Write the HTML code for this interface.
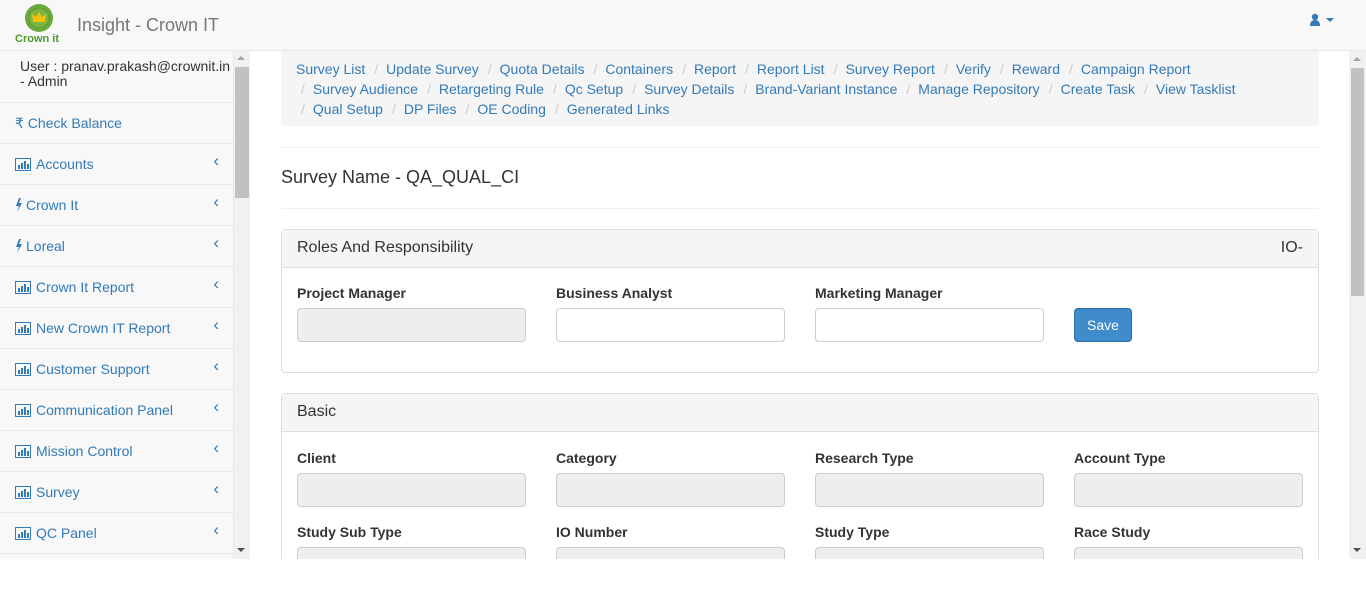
<!DOCTYPE html>
<html><head><meta charset="utf-8"><style>
*{box-sizing:border-box;margin:0;padding:0}
body{width:1366px;height:589px;overflow:hidden;background:#fff;font-family:"Liberation Sans",sans-serif;font-size:14px;color:#333;position:relative}
.top{position:absolute;left:0;top:0;width:1366px;height:51px;background:#f8f8f8;border-bottom:1px solid #e7e7e7}
.brand{position:absolute;left:77px;top:15px;font-size:18px;color:#777}
.side{position:absolute;left:0;top:51px;width:234px;height:508px;background:#f8f8f8;overflow:hidden;border-right:1px solid #e7e7e7}
.side .it{height:41px;border-bottom:1px solid #e7e7e7;color:#337ab7;padding:12px 0 0 15px;position:relative;font-size:14px}
.side .it svg{vertical-align:-2px;margin-right:5px}
.side .it .ar{position:absolute;right:14px;top:7px;color:#337ab7;font-size:17px}
.sb{position:absolute;background:#f1f1f1}
.main{position:absolute;left:250px;top:51px;width:1099px;height:508px;background:#fff;overflow:hidden}
.bc{position:absolute;left:31px;top:0;width:1038px;height:75px;background:#f5f5f5;border-radius:0 0 4px 4px;padding:8px 15px;line-height:20px;color:#337ab7;white-space:nowrap}
.bc .s{color:#ccc;padding:0 8px 0 9px}
.hr{position:absolute;left:31px;width:1038px;border-top:1px solid #eee}
.panel{position:absolute;left:31px;width:1038px;border:1px solid #ddd;border-radius:4px;background:#fff}
.ph{height:38px;background:#f5f5f5;border-bottom:1px solid #ddd;padding:9px 15px;font-size:16px}
.lbl{position:absolute;font-weight:bold;font-size:14px}
.inp{position:absolute;width:229px;height:34px;border:1px solid #ccc;border-radius:4px;background:#fff}
.inp.d{background:#eee}
</style></head><body>
<div class="top">
<svg style="position:absolute;left:24px;top:3px" width="30" height="30"><circle cx="15" cy="15" r="14" fill="#6aaa3a"/><circle cx="15" cy="15" r="10" fill="#7cb342" stroke="#5d9a2f"/><path d="M9 19 L8 11 L12 14 L15 9 L18 14 L22 11 L21 19Z" fill="#f4c20d"/></svg>
<div style="position:absolute;left:15px;top:33px;font-size:11px;font-weight:bold;color:#4c9a2a">Crown it</div>
<div class="brand">Insight - Crown IT</div>
<svg style="position:absolute;left:1309px;top:13px" width="30" height="14"><circle cx="6" cy="4" r="3.2" fill="#337ab7"/><path d="M1 13 Q1 7 6 7 Q11 7 11 13Z" fill="#337ab7"/><path d="M17 5 L25 5 L21 9Z" fill="#337ab7"/></svg>
</div>
<div class="side">
<div style="height:52px;border-bottom:1px solid #e7e7e7;padding:8px 0 0 20px;color:#333;line-height:15px">User : pranav.prakash@crownit.in<br>- Admin</div>
<div class="it">₹ Check Balance</div>
<div class="it"><svg width="16" height="13"><rect x="0.5" y="0.5" width="15" height="12" fill="none" stroke="#337ab7"/><rect x="3" y="7" width="2" height="4" fill="#337ab7"/><rect x="6" y="5" width="2" height="6" fill="#337ab7"/><rect x="9" y="3" width="2" height="8" fill="#337ab7"/><rect x="12" y="6" width="2" height="5" fill="#337ab7"/></svg>Accounts<span class="ar">‹</span></div>
<div class="it"><svg width="8" height="14" style="margin-right:3px"><path d="M4 0 L1 8 L4 8 L2 14 L7 5 L4 5 L6 0Z" fill="#337ab7"/></svg>Crown It<span class="ar">‹</span></div>
<div class="it"><svg width="8" height="14" style="margin-right:3px"><path d="M4 0 L1 8 L4 8 L2 14 L7 5 L4 5 L6 0Z" fill="#337ab7"/></svg>Loreal<span class="ar">‹</span></div>
<div class="it"><svg width="16" height="13"><rect x="0.5" y="0.5" width="15" height="12" fill="none" stroke="#337ab7"/><rect x="3" y="7" width="2" height="4" fill="#337ab7"/><rect x="6" y="5" width="2" height="6" fill="#337ab7"/><rect x="9" y="3" width="2" height="8" fill="#337ab7"/><rect x="12" y="6" width="2" height="5" fill="#337ab7"/></svg>Crown It Report<span class="ar">‹</span></div>
<div class="it"><svg width="16" height="13"><rect x="0.5" y="0.5" width="15" height="12" fill="none" stroke="#337ab7"/><rect x="3" y="7" width="2" height="4" fill="#337ab7"/><rect x="6" y="5" width="2" height="6" fill="#337ab7"/><rect x="9" y="3" width="2" height="8" fill="#337ab7"/><rect x="12" y="6" width="2" height="5" fill="#337ab7"/></svg>New Crown IT Report<span class="ar">‹</span></div>
<div class="it"><svg width="16" height="13"><rect x="0.5" y="0.5" width="15" height="12" fill="none" stroke="#337ab7"/><rect x="3" y="7" width="2" height="4" fill="#337ab7"/><rect x="6" y="5" width="2" height="6" fill="#337ab7"/><rect x="9" y="3" width="2" height="8" fill="#337ab7"/><rect x="12" y="6" width="2" height="5" fill="#337ab7"/></svg>Customer Support<span class="ar">‹</span></div>
<div class="it"><svg width="16" height="13"><rect x="0.5" y="0.5" width="15" height="12" fill="none" stroke="#337ab7"/><rect x="3" y="7" width="2" height="4" fill="#337ab7"/><rect x="6" y="5" width="2" height="6" fill="#337ab7"/><rect x="9" y="3" width="2" height="8" fill="#337ab7"/><rect x="12" y="6" width="2" height="5" fill="#337ab7"/></svg>Communication Panel<span class="ar">‹</span></div>
<div class="it"><svg width="16" height="13"><rect x="0.5" y="0.5" width="15" height="12" fill="none" stroke="#337ab7"/><rect x="3" y="7" width="2" height="4" fill="#337ab7"/><rect x="6" y="5" width="2" height="6" fill="#337ab7"/><rect x="9" y="3" width="2" height="8" fill="#337ab7"/><rect x="12" y="6" width="2" height="5" fill="#337ab7"/></svg>Mission Control<span class="ar">‹</span></div>
<div class="it"><svg width="16" height="13"><rect x="0.5" y="0.5" width="15" height="12" fill="none" stroke="#337ab7"/><rect x="3" y="7" width="2" height="4" fill="#337ab7"/><rect x="6" y="5" width="2" height="6" fill="#337ab7"/><rect x="9" y="3" width="2" height="8" fill="#337ab7"/><rect x="12" y="6" width="2" height="5" fill="#337ab7"/></svg>Survey<span class="ar">‹</span></div>
<div class="it"><svg width="16" height="13"><rect x="0.5" y="0.5" width="15" height="12" fill="none" stroke="#337ab7"/><rect x="3" y="7" width="2" height="4" fill="#337ab7"/><rect x="6" y="5" width="2" height="6" fill="#337ab7"/><rect x="9" y="3" width="2" height="8" fill="#337ab7"/><rect x="12" y="6" width="2" height="5" fill="#337ab7"/></svg>QC Panel<span class="ar">‹</span></div>
</div>
<div class="sb" style="left:234px;top:51px;width:16px;height:508px"></div>
<div style="position:absolute;left:235px;top:67px;width:14px;height:131px;background:#c1c1c1"></div>
<div style="position:absolute;left:237px;top:56px;width:0;height:0;border:4px solid transparent;border-bottom-color:#a3a3a3;border-top:0"></div>
<div style="position:absolute;left:237px;top:548px;width:0;height:0;border:4px solid transparent;border-top-color:#505050;border-bottom:0"></div>
<div class="sb" style="left:1349px;top:51px;width:17px;height:508px"></div>
<div style="position:absolute;left:1351px;top:68px;width:13px;height:228px;background:#c1c1c1"></div>
<div style="position:absolute;left:1353px;top:57px;width:0;height:0;border:4px solid transparent;border-bottom-color:#a3a3a3;border-top:0"></div>
<div style="position:absolute;left:1353px;top:548px;width:0;height:0;border:4px solid transparent;border-top-color:#505050;border-bottom:0"></div>
<div class="main">
<div class="bc">Survey List<span class="s">/</span>Update Survey<span class="s">/</span>Quota Details<span class="s">/</span>Containers<span class="s">/</span>Report<span class="s">/</span>Report List<span class="s">/</span>Survey Report<span class="s">/</span>Verify<span class="s">/</span>Reward<span class="s">/</span>Campaign Report<br><span class="s" style="padding-left:5px">/</span>Survey Audience<span class="s">/</span>Retargeting Rule<span class="s">/</span>Qc Setup<span class="s">/</span>Survey Details<span class="s">/</span>Brand-Variant Instance<span class="s">/</span>Manage Repository<span class="s">/</span>Create Task<span class="s">/</span>View Tasklist<br><span class="s" style="padding-left:5px">/</span>Qual Setup<span class="s">/</span>DP Files<span class="s">/</span>OE Coding<span class="s">/</span>Generated Links</div>
<div class="hr" style="top:96px"></div>
<div style="position:absolute;left:31px;top:116px;font-size:18px">Survey Name - QA_QUAL_CI</div>
<div class="hr" style="top:157px"></div>
<div class="panel" style="top:178px;height:144px">
<div class="ph">Roles And Responsibility<span style="float:right">IO-</span></div>
<div class="lbl" style="left:15px;top:55px">Project Manager</div>
<div class="lbl" style="left:274px;top:55px">Business Analyst</div>
<div class="lbl" style="left:533px;top:55px">Marketing Manager</div>
<div class="inp d" style="left:15px;top:78px"></div>
<div class="inp" style="left:274px;top:78px"></div>
<div class="inp" style="left:533px;top:78px"></div>
<div style="position:absolute;left:792px;top:78px;width:58px;height:34px;background:#3f8bcc;border:1px solid #2e6da4;border-radius:4px;color:#fff;text-align:center;line-height:32px">Save</div>
</div>
<div class="panel" style="top:342px;height:200px">
<div class="ph">Basic</div>
<div class="lbl" style="left:15px;top:56px">Client</div>
<div class="lbl" style="left:274px;top:56px">Category</div>
<div class="lbl" style="left:533px;top:56px">Research Type</div>
<div class="lbl" style="left:792px;top:56px">Account Type</div>
<div class="inp d" style="left:15px;top:79px"></div>
<div class="inp d" style="left:274px;top:79px"></div>
<div class="inp d" style="left:533px;top:79px"></div>
<div class="inp d" style="left:792px;top:79px"></div>
<div class="lbl" style="left:15px;top:130px">Study Sub Type</div>
<div class="lbl" style="left:274px;top:130px">IO Number</div>
<div class="lbl" style="left:533px;top:130px">Study Type</div>
<div class="lbl" style="left:792px;top:130px">Race Study</div>
<div class="inp d" style="left:15px;top:153px"></div>
<div class="inp d" style="left:274px;top:153px"></div>
<div class="inp d" style="left:533px;top:153px"></div>
<div class="inp d" style="left:792px;top:153px"></div>
</div>
</div>
<div style="position:absolute;left:0;top:559px;width:1366px;height:30px;background:#fff"></div>
</body></html>
